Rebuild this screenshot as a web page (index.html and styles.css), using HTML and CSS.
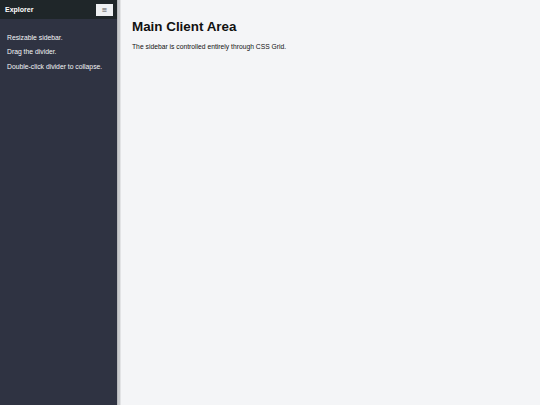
FILE: index.html
```html
<!DOCTYPE html>
<html lang="en">

<head>
  <meta charset="UTF-8">
  <meta name="viewport" content="width=device-width, initial-scale=1.0">
  <title>Resizable Sidebar</title>
  <link rel="stylesheet" href="styles.css">
</head>

<body>
  <div class="layout">

    <aside class="sidebar">
      <div class="sidebar-header">
        <span class="sidebar-title">Explorer</span>
        <button class="toggle-btn">&#8801;</button>
      </div>
      <div class="sidebar-content">
        <p>Resizable sidebar.</p>
        <p>Drag the divider.</p>
        <p>Double-click divider to collapse.</p>
      </div>
    </aside>

    <div class="divider"></div>

    <main class="main">
      <h1>Main Client Area</h1>
      <p>The sidebar is controlled entirely through CSS Grid.</p>
    </main>

  </div>
</body>

</html>
```

FILE: styles.css
```css
* {
  margin: 0;
  padding: 0;
  box-sizing: border-box;
}

body {
  font-family: "Liberation Sans", Arial, sans-serif;
}

.layout {
  display: grid;
  grid-template-columns: 117px 4px 1fr;
  height: 100vh;
  width: 100vw;
  overflow: hidden;
}

.sidebar {
  background: #2f3342;
  color: #f4f5f7;
  display: flex;
  flex-direction: column;
}

.sidebar-header {
  height: 19px;
  background: #1f2629;
  display: flex;
  align-items: center;
  justify-content: space-between;
  padding: 0 4px 0 5px;
}

.sidebar-title {
  font-size: 7px;
  font-weight: bold;
  color: #fff;
}

.toggle-btn {
  width: 17px;
  height: 12px;
  border: none;
  background: #eef0f2;
  color: #555;
  font-size: 7px;
  line-height: 12px;
  font-family: "DejaVu Sans", sans-serif;
  cursor: pointer;
}

.sidebar-content {
  padding: 11.5px 7px;
}

.sidebar-content p {
  font-size: 6.8px;
  line-height: 14.5px;
}

.divider {
  background: #c9cbce;
  border-left: 1px solid #b7b9bc;
  border-right: 1px solid #e2e3e5;
  cursor: col-resize;
}

.main {
  background: #f4f5f7;
  color: #111;
  padding: 18.5px 11px;
}

.main h1 {
  font-size: 13.4px;
  font-weight: bold;
  margin-bottom: 9px;
}

.main p {
  font-size: 6.75px;
}
```
